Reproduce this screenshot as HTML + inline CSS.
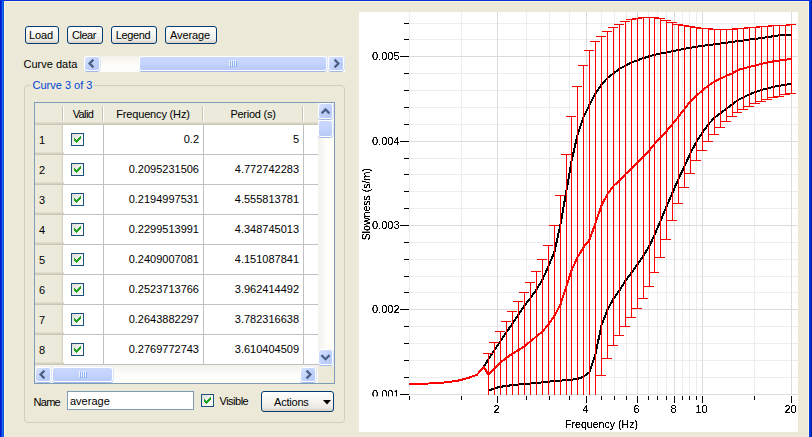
<!DOCTYPE html><html><head><meta charset="utf-8"><title>Curve browser</title><style>
html,body{margin:0;padding:0;}
body{width:812px;height:437px;overflow:hidden;background:#ece9d8;position:relative;font:11px "Liberation Sans", Arial, sans-serif;color:#000;}
*{box-sizing:border-box;}
.abs{position:absolute;}
.chart{position:absolute;left:0;top:0;}
.t{position:absolute;white-space:pre;line-height:13px;height:13px;}
.btn{position:absolute;border:1px solid #003c74;border-radius:3px;background:linear-gradient(#fff 0%,#f6f5f0 45%,#ecebe5 80%,#d6d0c5 100%);text-align:center;}
.btn span{position:absolute;left:-2px;right:0;white-space:pre;line-height:13px;}
.sbbtn{position:absolute;border:1px solid #fff;border-radius:3px;background:linear-gradient(135deg,#d9e4fe 0%,#c3d3fd 45%,#b4c7f6 100%);box-shadow:0 1px 0 #a3b8ea, 1px 0 0 #dbe4f8;}
.thumb{position:absolute;border:1px solid #fff;border-radius:3px;background:linear-gradient(#cad8fd 0%,#c3d3fd 50%,#b8caf7 100%);box-shadow:0 1px 0 #a3b8ea, 1px 0 0 #dbe4f8;}
.cb{position:absolute;width:13px;height:13px;border:1px solid #1c5180;background:linear-gradient(135deg,#dcdcd7 0%,#f3f3ef 50%,#fff 100%);}
.cb svg{position:absolute;left:0;top:0;}
.hdr{position:absolute;background:#ebeadb;}
</style></head><body>
<div class="abs" style="left:4px;top:1px;width:805px;height:1px;background:#fdf5d7"></div>
<div class="abs" style="left:4px;top:1px;width:1px;height:436px;background:#fdf5d7"></div>
<div class="abs" style="left:808px;top:1px;width:1px;height:436px;background:#fdf5d7"></div>
<div class="abs" style="left:0px;top:0;width:1px;height:437px;background:#0019cf"></div>
<div class="abs" style="left:1px;top:0;width:1px;height:437px;background:#0831d9"></div>
<div class="abs" style="left:2px;top:0;width:1px;height:437px;background:#166aee"></div>
<div class="abs" style="left:3px;top:0;width:1px;height:437px;background:#0855dd"></div>
<div class="abs" style="left:809px;top:0;width:1px;height:437px;background:#0037e6"></div>
<div class="abs" style="left:810px;top:0;width:1px;height:437px;background:#0030d8"></div>
<div class="abs" style="left:811px;top:0;width:1px;height:437px;background:#001ea0"></div>
<div class="abs" style="left:0;top:0;width:812px;height:1px;background:#0831d9"></div>
<div class="btn" style="left:25px;top:26px;width:34px;height:18px"><span style="top:2.0px;letter-spacing:-0.15px">Load</span></div>
<div class="btn" style="left:67px;top:26px;width:36px;height:18px"><span style="top:2.0px;letter-spacing:-0.45px">Clear</span></div>
<div class="btn" style="left:111px;top:26px;width:46px;height:18px"><span style="top:2.0px;letter-spacing:-0.4px">Legend</span></div>
<div class="btn" style="left:165px;top:26px;width:52px;height:18px"><span style="top:2.0px;letter-spacing:-0.1px">Average</span></div>
<div class="t" style="left:23.5px;top:58px">Curve data</div>
<div class="abs" style="left:84px;top:56px;width:261px;height:16px;background:linear-gradient(#f3f1ec,#fefefb 60%)"></div>
<div class="sbbtn" style="left:84px;top:56px;width:16px;height:15px"><svg width="16" height="16" viewBox="0 0 16 16" style="position:absolute;left:-1px;top:-1px"><path d="M9.4 3.6 L5.6 7.5 L9.4 11.4" fill="none" stroke="#4d6185" stroke-width="2.3"/></svg></div>
<div class="sbbtn" style="left:328px;top:56px;width:16px;height:15px"><svg width="16" height="16" viewBox="0 0 16 16" style="position:absolute;left:-1px;top:-1px"><path d="M6.6 3.6 L10.4 7.5 L6.6 11.4" fill="none" stroke="#4d6185" stroke-width="2.3"/></svg></div>
<div class="thumb" style="left:139px;top:56px;width:188px;height:15px"></div>
<div class="abs" style="left:229px;top:60px;width:1px;height:6px;background:#eef4fe"></div><div class="abs" style="left:230px;top:61px;width:1px;height:6px;background:#8cb0f8"></div><div class="abs" style="left:231px;top:60px;width:1px;height:6px;background:#eef4fe"></div><div class="abs" style="left:232px;top:61px;width:1px;height:6px;background:#8cb0f8"></div><div class="abs" style="left:233px;top:60px;width:1px;height:6px;background:#eef4fe"></div><div class="abs" style="left:234px;top:61px;width:1px;height:6px;background:#8cb0f8"></div><div class="abs" style="left:235px;top:60px;width:1px;height:6px;background:#eef4fe"></div><div class="abs" style="left:236px;top:61px;width:1px;height:6px;background:#8cb0f8"></div>
<div class="abs" style="left:24px;top:85px;width:321px;height:338px;border:1px solid #d0d0bf;border-radius:4px"></div>
<div class="t" style="left:30.5px;top:79px;background:#ece9d8;padding:0 2px;color:#0046d5">Curve 3 of 3</div>
<div class="abs" style="left:34px;top:102px;width:301px;height:282px;border:1px solid #7f9db9;background:#fff"></div>
<div class="hdr" style="left:35px;top:103px;width:283px;height:22px;border-bottom:1px solid #cbc7b8;box-shadow:inset 0 -1px 0 #d6d2c2, inset 0 -2px 0 #e2decd"></div>
<div class="abs" style="left:62px;top:106px;width:1px;height:15px;background:#c7c5b2"></div><div class="abs" style="left:63px;top:106px;width:1px;height:15px;background:#fff"></div>
<div class="abs" style="left:102px;top:106px;width:1px;height:15px;background:#c7c5b2"></div><div class="abs" style="left:103px;top:106px;width:1px;height:15px;background:#fff"></div>
<div class="abs" style="left:202px;top:106px;width:1px;height:15px;background:#c7c5b2"></div><div class="abs" style="left:203px;top:106px;width:1px;height:15px;background:#fff"></div>
<div class="abs" style="left:302px;top:106px;width:1px;height:15px;background:#c7c5b2"></div><div class="abs" style="left:303px;top:106px;width:1px;height:15px;background:#fff"></div>
<div class="t" style="left:64px;width:38px;top:108px;text-align:center;letter-spacing:-0.6px">Valid</div>
<div class="t" style="left:104px;width:98px;top:108px;text-align:center;letter-spacing:-0.17px">Frequency (Hz)</div>
<div class="t" style="left:204px;width:98px;top:108px;text-align:center;letter-spacing:-0.25px">Period (s)</div>
<div class="hdr" style="left:35px;top:125px;width:28px;height:30px;border-right:1px solid #d8d4c4;box-shadow:inset -1px 0 0 #e4e1d1"></div>
<div class="abs" style="left:35px;top:152px;width:29px;height:3px;background:linear-gradient(#e2decd 0,#e2decd 33%,#d6d2c2 33%,#d6d2c2 67%,#cbc7b8 67%)"></div>
<div class="t" style="left:39px;top:134px">1</div>
<div class="abs" style="left:63px;top:154px;width:255px;height:1px;background:#c0c0c0"></div>
<div class="cb" style="left:71px;top:133px"><svg width="11" height="11" viewBox="1 1 11 11" shape-rendering="crispEdges" style="position:absolute;left:0;top:0"><g fill="#21a121"><rect x="3" y="5" width="1" height="3"/><rect x="4" y="6" width="1" height="3"/><rect x="5" y="7" width="1" height="3"/><rect x="6" y="6" width="1" height="3"/><rect x="7" y="5" width="1" height="3"/><rect x="8" y="4" width="1" height="3"/><rect x="9" y="3" width="1" height="3"/></g></svg></div>
<div class="t" style="left:104px;width:95px;top:133px;text-align:right">0.2</div>
<div class="t" style="left:204px;width:95px;top:133px;text-align:right">5</div>
<div class="hdr" style="left:35px;top:155px;width:28px;height:30px;border-right:1px solid #d8d4c4;box-shadow:inset -1px 0 0 #e4e1d1"></div>
<div class="abs" style="left:35px;top:182px;width:29px;height:3px;background:linear-gradient(#e2decd 0,#e2decd 33%,#d6d2c2 33%,#d6d2c2 67%,#cbc7b8 67%)"></div>
<div class="t" style="left:39px;top:164px">2</div>
<div class="abs" style="left:63px;top:184px;width:255px;height:1px;background:#c0c0c0"></div>
<div class="cb" style="left:71px;top:163px"><svg width="11" height="11" viewBox="1 1 11 11" shape-rendering="crispEdges" style="position:absolute;left:0;top:0"><g fill="#21a121"><rect x="3" y="5" width="1" height="3"/><rect x="4" y="6" width="1" height="3"/><rect x="5" y="7" width="1" height="3"/><rect x="6" y="6" width="1" height="3"/><rect x="7" y="5" width="1" height="3"/><rect x="8" y="4" width="1" height="3"/><rect x="9" y="3" width="1" height="3"/></g></svg></div>
<div class="t" style="left:104px;width:95px;top:163px;text-align:right">0.2095231506</div>
<div class="t" style="left:204px;width:95px;top:163px;text-align:right">4.772742283</div>
<div class="hdr" style="left:35px;top:185px;width:28px;height:30px;border-right:1px solid #d8d4c4;box-shadow:inset -1px 0 0 #e4e1d1"></div>
<div class="abs" style="left:35px;top:212px;width:29px;height:3px;background:linear-gradient(#e2decd 0,#e2decd 33%,#d6d2c2 33%,#d6d2c2 67%,#cbc7b8 67%)"></div>
<div class="t" style="left:39px;top:194px">3</div>
<div class="abs" style="left:63px;top:214px;width:255px;height:1px;background:#c0c0c0"></div>
<div class="cb" style="left:71px;top:193px"><svg width="11" height="11" viewBox="1 1 11 11" shape-rendering="crispEdges" style="position:absolute;left:0;top:0"><g fill="#21a121"><rect x="3" y="5" width="1" height="3"/><rect x="4" y="6" width="1" height="3"/><rect x="5" y="7" width="1" height="3"/><rect x="6" y="6" width="1" height="3"/><rect x="7" y="5" width="1" height="3"/><rect x="8" y="4" width="1" height="3"/><rect x="9" y="3" width="1" height="3"/></g></svg></div>
<div class="t" style="left:104px;width:95px;top:193px;text-align:right">0.2194997531</div>
<div class="t" style="left:204px;width:95px;top:193px;text-align:right">4.555813781</div>
<div class="hdr" style="left:35px;top:215px;width:28px;height:30px;border-right:1px solid #d8d4c4;box-shadow:inset -1px 0 0 #e4e1d1"></div>
<div class="abs" style="left:35px;top:242px;width:29px;height:3px;background:linear-gradient(#e2decd 0,#e2decd 33%,#d6d2c2 33%,#d6d2c2 67%,#cbc7b8 67%)"></div>
<div class="t" style="left:39px;top:224px">4</div>
<div class="abs" style="left:63px;top:244px;width:255px;height:1px;background:#c0c0c0"></div>
<div class="cb" style="left:71px;top:223px"><svg width="11" height="11" viewBox="1 1 11 11" shape-rendering="crispEdges" style="position:absolute;left:0;top:0"><g fill="#21a121"><rect x="3" y="5" width="1" height="3"/><rect x="4" y="6" width="1" height="3"/><rect x="5" y="7" width="1" height="3"/><rect x="6" y="6" width="1" height="3"/><rect x="7" y="5" width="1" height="3"/><rect x="8" y="4" width="1" height="3"/><rect x="9" y="3" width="1" height="3"/></g></svg></div>
<div class="t" style="left:104px;width:95px;top:223px;text-align:right">0.2299513991</div>
<div class="t" style="left:204px;width:95px;top:223px;text-align:right">4.348745013</div>
<div class="hdr" style="left:35px;top:245px;width:28px;height:30px;border-right:1px solid #d8d4c4;box-shadow:inset -1px 0 0 #e4e1d1"></div>
<div class="abs" style="left:35px;top:272px;width:29px;height:3px;background:linear-gradient(#e2decd 0,#e2decd 33%,#d6d2c2 33%,#d6d2c2 67%,#cbc7b8 67%)"></div>
<div class="t" style="left:39px;top:254px">5</div>
<div class="abs" style="left:63px;top:274px;width:255px;height:1px;background:#c0c0c0"></div>
<div class="cb" style="left:71px;top:253px"><svg width="11" height="11" viewBox="1 1 11 11" shape-rendering="crispEdges" style="position:absolute;left:0;top:0"><g fill="#21a121"><rect x="3" y="5" width="1" height="3"/><rect x="4" y="6" width="1" height="3"/><rect x="5" y="7" width="1" height="3"/><rect x="6" y="6" width="1" height="3"/><rect x="7" y="5" width="1" height="3"/><rect x="8" y="4" width="1" height="3"/><rect x="9" y="3" width="1" height="3"/></g></svg></div>
<div class="t" style="left:104px;width:95px;top:253px;text-align:right">0.2409007081</div>
<div class="t" style="left:204px;width:95px;top:253px;text-align:right">4.151087841</div>
<div class="hdr" style="left:35px;top:275px;width:28px;height:30px;border-right:1px solid #d8d4c4;box-shadow:inset -1px 0 0 #e4e1d1"></div>
<div class="abs" style="left:35px;top:302px;width:29px;height:3px;background:linear-gradient(#e2decd 0,#e2decd 33%,#d6d2c2 33%,#d6d2c2 67%,#cbc7b8 67%)"></div>
<div class="t" style="left:39px;top:284px">6</div>
<div class="abs" style="left:63px;top:304px;width:255px;height:1px;background:#c0c0c0"></div>
<div class="cb" style="left:71px;top:283px"><svg width="11" height="11" viewBox="1 1 11 11" shape-rendering="crispEdges" style="position:absolute;left:0;top:0"><g fill="#21a121"><rect x="3" y="5" width="1" height="3"/><rect x="4" y="6" width="1" height="3"/><rect x="5" y="7" width="1" height="3"/><rect x="6" y="6" width="1" height="3"/><rect x="7" y="5" width="1" height="3"/><rect x="8" y="4" width="1" height="3"/><rect x="9" y="3" width="1" height="3"/></g></svg></div>
<div class="t" style="left:104px;width:95px;top:283px;text-align:right">0.2523713766</div>
<div class="t" style="left:204px;width:95px;top:283px;text-align:right">3.962414492</div>
<div class="hdr" style="left:35px;top:305px;width:28px;height:30px;border-right:1px solid #d8d4c4;box-shadow:inset -1px 0 0 #e4e1d1"></div>
<div class="abs" style="left:35px;top:332px;width:29px;height:3px;background:linear-gradient(#e2decd 0,#e2decd 33%,#d6d2c2 33%,#d6d2c2 67%,#cbc7b8 67%)"></div>
<div class="t" style="left:39px;top:314px">7</div>
<div class="abs" style="left:63px;top:334px;width:255px;height:1px;background:#c0c0c0"></div>
<div class="cb" style="left:71px;top:313px"><svg width="11" height="11" viewBox="1 1 11 11" shape-rendering="crispEdges" style="position:absolute;left:0;top:0"><g fill="#21a121"><rect x="3" y="5" width="1" height="3"/><rect x="4" y="6" width="1" height="3"/><rect x="5" y="7" width="1" height="3"/><rect x="6" y="6" width="1" height="3"/><rect x="7" y="5" width="1" height="3"/><rect x="8" y="4" width="1" height="3"/><rect x="9" y="3" width="1" height="3"/></g></svg></div>
<div class="t" style="left:104px;width:95px;top:313px;text-align:right">0.2643882297</div>
<div class="t" style="left:204px;width:95px;top:313px;text-align:right">3.782316638</div>
<div class="hdr" style="left:35px;top:335px;width:28px;height:30px;border-right:1px solid #d8d4c4;box-shadow:inset -1px 0 0 #e4e1d1"></div>
<div class="abs" style="left:35px;top:362px;width:29px;height:3px;background:linear-gradient(#e2decd 0,#e2decd 33%,#d6d2c2 33%,#d6d2c2 67%,#cbc7b8 67%)"></div>
<div class="t" style="left:39px;top:344px">8</div>
<div class="abs" style="left:63px;top:364px;width:255px;height:1px;background:#c0c0c0"></div>
<div class="cb" style="left:71px;top:343px"><svg width="11" height="11" viewBox="1 1 11 11" shape-rendering="crispEdges" style="position:absolute;left:0;top:0"><g fill="#21a121"><rect x="3" y="5" width="1" height="3"/><rect x="4" y="6" width="1" height="3"/><rect x="5" y="7" width="1" height="3"/><rect x="6" y="6" width="1" height="3"/><rect x="7" y="5" width="1" height="3"/><rect x="8" y="4" width="1" height="3"/><rect x="9" y="3" width="1" height="3"/></g></svg></div>
<div class="t" style="left:104px;width:95px;top:343px;text-align:right">0.2769772743</div>
<div class="t" style="left:204px;width:95px;top:343px;text-align:right">3.610404509</div>
<div class="abs" style="left:103px;top:125px;width:1px;height:240px;background:#c0c0c0"></div>
<div class="abs" style="left:203px;top:125px;width:1px;height:240px;background:#c0c0c0"></div>
<div class="abs" style="left:303px;top:125px;width:1px;height:240px;background:#c0c0c0"></div>
<div class="abs" style="left:318px;top:103px;width:16px;height:263px;background:linear-gradient(90deg,#f3f1ec,#fefefb 60%)"></div>
<div class="sbbtn" style="left:318px;top:103px;width:15px;height:16px"><svg width="16" height="16" viewBox="0 0 16 16" style="position:absolute;left:-1px;top:-1px"><path d="M3.6 10.4 L7.5 6.5 L11.4 10.4" fill="none" stroke="#4d6185" stroke-width="2.3"/></svg></div>
<div class="sbbtn" style="left:318px;top:349px;width:15px;height:16px"><svg width="16" height="16" viewBox="0 0 16 16" style="position:absolute;left:-1px;top:-1px"><path d="M3.4 6.1 L7.5 10.2 L11.6 6.1" fill="none" stroke="#4d6185" stroke-width="2.3"/></svg></div>
<div class="thumb" style="left:318px;top:120px;width:15px;height:17px"></div>
<div class="abs" style="left:35px;top:365px;width:283px;height:18px;background:linear-gradient(#f3f1ec,#fefefb 60%)"></div>
<div class="abs" style="left:318px;top:366px;width:16px;height:17px;background:#ece9d8"></div>
<div class="sbbtn" style="left:35px;top:367px;width:16px;height:15px"><svg width="16" height="16" viewBox="0 0 16 16" style="position:absolute;left:-1px;top:-1px"><path d="M9.4 3.6 L5.6 7.5 L9.4 11.4" fill="none" stroke="#4d6185" stroke-width="2.3"/></svg></div>
<div class="sbbtn" style="left:300px;top:367px;width:16px;height:15px"><svg width="16" height="16" viewBox="0 0 16 16" style="position:absolute;left:-1px;top:-1px"><path d="M6.6 3.6 L10.4 7.5 L6.6 11.4" fill="none" stroke="#4d6185" stroke-width="2.3"/></svg></div>
<div class="thumb" style="left:52px;top:367px;width:61px;height:15px"></div>
<div class="abs" style="left:79px;top:371px;width:1px;height:6px;background:#eef4fe"></div><div class="abs" style="left:80px;top:372px;width:1px;height:6px;background:#8cb0f8"></div><div class="abs" style="left:81px;top:371px;width:1px;height:6px;background:#eef4fe"></div><div class="abs" style="left:82px;top:372px;width:1px;height:6px;background:#8cb0f8"></div><div class="abs" style="left:83px;top:371px;width:1px;height:6px;background:#eef4fe"></div><div class="abs" style="left:84px;top:372px;width:1px;height:6px;background:#8cb0f8"></div><div class="abs" style="left:85px;top:371px;width:1px;height:6px;background:#eef4fe"></div><div class="abs" style="left:86px;top:372px;width:1px;height:6px;background:#8cb0f8"></div>
<div class="t" style="left:33.5px;top:396px;letter-spacing:-0.7px">Name</div>
<div class="abs" style="left:67px;top:391px;width:127px;height:19px;border:1px solid #7f9db9;background:#fff"></div>
<div class="t" style="left:70px;top:395px">average</div>
<div class="cb" style="left:201px;top:394px"><svg width="11" height="11" viewBox="1 1 11 11" shape-rendering="crispEdges" style="position:absolute;left:0;top:0"><g fill="#21a121"><rect x="3" y="5" width="1" height="3"/><rect x="4" y="6" width="1" height="3"/><rect x="5" y="7" width="1" height="3"/><rect x="6" y="6" width="1" height="3"/><rect x="7" y="5" width="1" height="3"/><rect x="8" y="4" width="1" height="3"/><rect x="9" y="3" width="1" height="3"/></g></svg></div>
<div class="t" style="left:219.5px;top:395px;letter-spacing:-0.5px">Visible</div>
<div class="btn" style="left:261px;top:391px;width:73px;height:21px"><span style="left:12px;right:auto;top:4px;letter-spacing:-0.2px">Actions</span><svg width="9" height="5" viewBox="0 0 9 5" style="position:absolute;left:60.5px;top:8px"><path d="M0 0 L8 0 L4 4.5 Z" fill="#000"/></svg></div>
<svg class="chart" width="812" height="437" viewBox="0 0 812 437" shape-rendering="crispEdges">
<rect x="359" y="12" width="439" height="420" fill="#fff"/>
<clipPath id="pc"><rect x="409" y="12" width="389" height="383"/></clipPath>
<clipPath id="lc"><rect x="359" y="12" width="50" height="384.5"/></clipPath>
<rect x="409" y="12" width="1" height="383" fill="#ececec"/>
<rect x="461" y="12" width="1" height="383" fill="#ececec"/>
<rect x="497" y="12" width="1" height="383" fill="#dcdcdc"/>
<rect x="526" y="12" width="1" height="383" fill="#ececec"/>
<rect x="549" y="12" width="1" height="383" fill="#ececec"/>
<rect x="569" y="12" width="1" height="383" fill="#ececec"/>
<rect x="586" y="12" width="1" height="383" fill="#dcdcdc"/>
<rect x="601" y="12" width="1" height="383" fill="#ececec"/>
<rect x="614" y="12" width="1" height="383" fill="#ececec"/>
<rect x="626" y="12" width="1" height="383" fill="#ececec"/>
<rect x="637" y="12" width="1" height="383" fill="#dcdcdc"/>
<rect x="648" y="12" width="1" height="383" fill="#ececec"/>
<rect x="657" y="12" width="1" height="383" fill="#ececec"/>
<rect x="666" y="12" width="1" height="383" fill="#ececec"/>
<rect x="674" y="12" width="1" height="383" fill="#dcdcdc"/>
<rect x="682" y="12" width="1" height="383" fill="#ececec"/>
<rect x="689" y="12" width="1" height="383" fill="#ececec"/>
<rect x="696" y="12" width="1" height="383" fill="#ececec"/>
<rect x="702" y="12" width="1" height="383" fill="#dcdcdc"/>
<rect x="754" y="12" width="1" height="383" fill="#ececec"/>
<rect x="791" y="12" width="1" height="383" fill="#dcdcdc"/>
<rect x="409" y="394" width="389" height="1" fill="#dcdcdc"/>
<rect x="409" y="377" width="389" height="1" fill="#ececec"/>
<rect x="409" y="360" width="389" height="1" fill="#ececec"/>
<rect x="409" y="343" width="389" height="1" fill="#ececec"/>
<rect x="409" y="326" width="389" height="1" fill="#ececec"/>
<rect x="409" y="309" width="389" height="1" fill="#dcdcdc"/>
<rect x="409" y="292" width="389" height="1" fill="#ececec"/>
<rect x="409" y="276" width="389" height="1" fill="#ececec"/>
<rect x="409" y="259" width="389" height="1" fill="#ececec"/>
<rect x="409" y="242" width="389" height="1" fill="#ececec"/>
<rect x="409" y="225" width="389" height="1" fill="#dcdcdc"/>
<rect x="409" y="208" width="389" height="1" fill="#ececec"/>
<rect x="409" y="191" width="389" height="1" fill="#ececec"/>
<rect x="409" y="174" width="389" height="1" fill="#ececec"/>
<rect x="409" y="158" width="389" height="1" fill="#ececec"/>
<rect x="409" y="141" width="389" height="1" fill="#dcdcdc"/>
<rect x="409" y="124" width="389" height="1" fill="#ececec"/>
<rect x="409" y="107" width="389" height="1" fill="#ececec"/>
<rect x="409" y="90" width="389" height="1" fill="#ececec"/>
<rect x="409" y="73" width="389" height="1" fill="#ececec"/>
<rect x="409" y="56" width="389" height="1" fill="#dcdcdc"/>
<rect x="409" y="39" width="389" height="1" fill="#ececec"/>
<rect x="409" y="23" width="389" height="1" fill="#ececec"/>
<rect x="497" y="12" width="1" height="383" fill="#dcdcdc"/>
<rect x="586" y="12" width="1" height="383" fill="#dcdcdc"/>
<rect x="637" y="12" width="1" height="383" fill="#dcdcdc"/>
<rect x="674" y="12" width="1" height="383" fill="#dcdcdc"/>
<rect x="702" y="12" width="1" height="383" fill="#dcdcdc"/>
<rect x="791" y="12" width="1" height="383" fill="#dcdcdc"/>
<rect x="409" y="394" width="389" height="1" fill="#dcdcdc"/>
<rect x="409" y="309" width="389" height="1" fill="#dcdcdc"/>
<rect x="409" y="225" width="389" height="1" fill="#dcdcdc"/>
<rect x="409" y="141" width="389" height="1" fill="#dcdcdc"/>
<rect x="409" y="56" width="389" height="1" fill="#dcdcdc"/>
<rect x="409" y="396" width="1" height="4" fill="#000"/>
<rect x="461" y="396" width="1" height="4" fill="#000"/>
<rect x="497" y="396" width="1" height="7" fill="#000"/>
<rect x="526" y="396" width="1" height="4" fill="#000"/>
<rect x="549" y="396" width="1" height="4" fill="#000"/>
<rect x="569" y="396" width="1" height="4" fill="#000"/>
<rect x="586" y="396" width="1" height="7" fill="#000"/>
<rect x="601" y="396" width="1" height="4" fill="#000"/>
<rect x="614" y="396" width="1" height="4" fill="#000"/>
<rect x="626" y="396" width="1" height="4" fill="#000"/>
<rect x="637" y="396" width="1" height="7" fill="#000"/>
<rect x="648" y="396" width="1" height="4" fill="#000"/>
<rect x="657" y="396" width="1" height="4" fill="#000"/>
<rect x="666" y="396" width="1" height="4" fill="#000"/>
<rect x="674" y="396" width="1" height="7" fill="#000"/>
<rect x="682" y="396" width="1" height="4" fill="#000"/>
<rect x="689" y="396" width="1" height="4" fill="#000"/>
<rect x="696" y="396" width="1" height="4" fill="#000"/>
<rect x="702" y="396" width="1" height="7" fill="#000"/>
<rect x="754" y="396" width="1" height="4" fill="#000"/>
<rect x="791" y="396" width="1" height="7" fill="#000"/>
<rect x="400" y="394" width="9" height="1" fill="#000"/>
<rect x="404" y="377" width="5" height="1" fill="#000"/>
<rect x="404" y="360" width="5" height="1" fill="#000"/>
<rect x="404" y="343" width="5" height="1" fill="#000"/>
<rect x="404" y="326" width="5" height="1" fill="#000"/>
<rect x="400" y="309" width="9" height="1" fill="#000"/>
<rect x="404" y="292" width="5" height="1" fill="#000"/>
<rect x="404" y="276" width="5" height="1" fill="#000"/>
<rect x="404" y="259" width="5" height="1" fill="#000"/>
<rect x="404" y="242" width="5" height="1" fill="#000"/>
<rect x="400" y="225" width="9" height="1" fill="#000"/>
<rect x="404" y="208" width="5" height="1" fill="#000"/>
<rect x="404" y="191" width="5" height="1" fill="#000"/>
<rect x="404" y="174" width="5" height="1" fill="#000"/>
<rect x="404" y="158" width="5" height="1" fill="#000"/>
<rect x="400" y="141" width="9" height="1" fill="#000"/>
<rect x="404" y="124" width="5" height="1" fill="#000"/>
<rect x="404" y="107" width="5" height="1" fill="#000"/>
<rect x="404" y="90" width="5" height="1" fill="#000"/>
<rect x="404" y="73" width="5" height="1" fill="#000"/>
<rect x="400" y="56" width="9" height="1" fill="#000"/>
<rect x="404" y="39" width="5" height="1" fill="#000"/>
<rect x="404" y="23" width="5" height="1" fill="#000"/>
<polyline points="483.4,367.2 488.5,359.2 494.5,350.2 500.5,341.2 506.5,332.0 512.5,323.6 518.5,314.5 524.5,305.7 530.5,297.9 536.5,289.5 542.5,279.6 548.5,266.0 554.5,251.7 560.5,224.3 566.5,190.4 571.5,161.3 577.5,134.9 583.5,117.2 589.5,104.7 595.5,93.5 601.5,84.3 607.5,78.0 613.5,73.2 619.5,68.9 625.5,65.7 631.5,62.5 637.5,60.2 643.5,58.1 649.5,56.2 654.5,54.9 660.5,53.4 666.5,52.4 672.5,51.3 678.5,50.0 684.5,48.8 690.5,47.8 696.5,46.8 702.5,45.8 708.5,45.1 714.5,44.3 720.5,43.6 726.5,42.7 732.5,41.9 737.5,41.2 743.5,40.4 749.5,39.6 755.5,38.8 761.5,38.0 767.5,37.1 773.5,36.2 779.5,35.3 785.5,35.0 791.5,34.7" fill="none" stroke="#000" stroke-width="2" stroke-linejoin="round" clip-path="url(#pc)"/>
<polyline points="488.5,390.8 494.5,388.2 500.5,386.8 506.5,385.9 512.5,385.1 518.5,384.4 524.5,383.9 530.5,383.5 536.5,382.9 542.5,382.4 548.5,381.7 554.5,381.1 560.5,380.6 566.5,380.2 571.5,379.7 577.5,378.8 583.5,376.8 589.5,372.1 595.5,353.7 601.5,325.3 607.5,309.7 613.5,298.7 619.5,290.3 625.5,280.7 631.5,272.7 637.5,264.4 643.5,255.5 649.5,245.8 654.5,234.9 660.5,221.0 666.5,206.4 672.5,192.7 678.5,178.8 684.5,166.3 690.5,153.0 696.5,141.8 702.5,132.3 708.5,124.2 714.5,117.7 720.5,113.2 726.5,108.6 732.5,104.1 737.5,100.3 743.5,97.2 749.5,94.2 755.5,92.0 761.5,89.9 767.5,88.3 773.5,86.8 779.5,85.7 785.5,84.7 791.5,83.8" fill="none" stroke="#000" stroke-width="2" stroke-linejoin="round" clip-path="url(#pc)"/>
<g clip-path="url(#pc)" fill="#f00">
<rect x="488" y="353" width="1" height="68"/>
<rect x="483" y="353" width="10" height="1"/>
<rect x="483" y="420" width="10" height="1"/>
<rect x="494" y="342" width="1" height="79"/>
<rect x="489" y="342" width="10" height="1"/>
<rect x="489" y="420" width="10" height="1"/>
<rect x="500" y="331" width="1" height="90"/>
<rect x="495" y="331" width="10" height="1"/>
<rect x="495" y="420" width="10" height="1"/>
<rect x="506" y="321" width="1" height="100"/>
<rect x="501" y="321" width="10" height="1"/>
<rect x="501" y="420" width="10" height="1"/>
<rect x="512" y="311" width="1" height="110"/>
<rect x="507" y="311" width="10" height="1"/>
<rect x="507" y="420" width="10" height="1"/>
<rect x="518" y="301" width="1" height="120"/>
<rect x="513" y="301" width="10" height="1"/>
<rect x="513" y="420" width="10" height="1"/>
<rect x="524" y="292" width="1" height="129"/>
<rect x="519" y="292" width="10" height="1"/>
<rect x="519" y="420" width="10" height="1"/>
<rect x="530" y="282" width="1" height="139"/>
<rect x="525" y="282" width="10" height="1"/>
<rect x="525" y="420" width="10" height="1"/>
<rect x="536" y="271" width="1" height="150"/>
<rect x="531" y="271" width="10" height="1"/>
<rect x="531" y="420" width="10" height="1"/>
<rect x="542" y="259" width="1" height="162"/>
<rect x="537" y="259" width="10" height="1"/>
<rect x="537" y="420" width="10" height="1"/>
<rect x="548" y="245" width="1" height="176"/>
<rect x="543" y="245" width="10" height="1"/>
<rect x="543" y="420" width="10" height="1"/>
<rect x="554" y="225" width="1" height="196"/>
<rect x="549" y="225" width="10" height="1"/>
<rect x="549" y="420" width="10" height="1"/>
<rect x="560" y="195" width="1" height="226"/>
<rect x="555" y="195" width="10" height="1"/>
<rect x="555" y="420" width="10" height="1"/>
<rect x="566" y="154" width="1" height="267"/>
<rect x="561" y="154" width="10" height="1"/>
<rect x="561" y="420" width="10" height="1"/>
<rect x="571" y="116" width="1" height="305"/>
<rect x="566" y="116" width="10" height="1"/>
<rect x="566" y="420" width="10" height="1"/>
<rect x="577" y="86" width="1" height="335"/>
<rect x="572" y="86" width="10" height="1"/>
<rect x="572" y="420" width="10" height="1"/>
<rect x="583" y="65" width="1" height="356"/>
<rect x="578" y="65" width="10" height="1"/>
<rect x="578" y="420" width="10" height="1"/>
<rect x="589" y="50" width="1" height="371"/>
<rect x="584" y="50" width="10" height="1"/>
<rect x="584" y="420" width="10" height="1"/>
<rect x="595" y="41" width="1" height="380"/>
<rect x="590" y="41" width="10" height="1"/>
<rect x="590" y="420" width="10" height="1"/>
<rect x="601" y="36" width="1" height="340"/>
<rect x="596" y="36" width="10" height="1"/>
<rect x="596" y="375" width="10" height="1"/>
<rect x="607" y="31" width="1" height="328"/>
<rect x="602" y="31" width="10" height="1"/>
<rect x="602" y="358" width="10" height="1"/>
<rect x="613" y="27" width="1" height="319"/>
<rect x="608" y="27" width="10" height="1"/>
<rect x="608" y="345" width="10" height="1"/>
<rect x="619" y="24" width="1" height="312"/>
<rect x="614" y="24" width="10" height="1"/>
<rect x="614" y="335" width="10" height="1"/>
<rect x="625" y="21" width="1" height="306"/>
<rect x="620" y="21" width="10" height="1"/>
<rect x="620" y="326" width="10" height="1"/>
<rect x="631" y="19" width="1" height="299"/>
<rect x="626" y="19" width="10" height="1"/>
<rect x="626" y="317" width="10" height="1"/>
<rect x="637" y="18" width="1" height="291"/>
<rect x="632" y="18" width="10" height="1"/>
<rect x="632" y="308" width="10" height="1"/>
<rect x="643" y="17" width="1" height="282"/>
<rect x="638" y="17" width="10" height="1"/>
<rect x="638" y="298" width="10" height="1"/>
<rect x="649" y="17" width="1" height="270"/>
<rect x="644" y="17" width="10" height="1"/>
<rect x="644" y="286" width="10" height="1"/>
<rect x="654" y="17" width="1" height="256"/>
<rect x="649" y="17" width="10" height="1"/>
<rect x="649" y="272" width="10" height="1"/>
<rect x="660" y="18" width="1" height="240"/>
<rect x="655" y="18" width="10" height="1"/>
<rect x="655" y="257" width="10" height="1"/>
<rect x="666" y="20" width="1" height="220"/>
<rect x="661" y="20" width="10" height="1"/>
<rect x="661" y="239" width="10" height="1"/>
<rect x="672" y="22" width="1" height="199"/>
<rect x="667" y="22" width="10" height="1"/>
<rect x="667" y="220" width="10" height="1"/>
<rect x="678" y="24" width="1" height="180"/>
<rect x="673" y="24" width="10" height="1"/>
<rect x="673" y="203" width="10" height="1"/>
<rect x="684" y="25" width="1" height="163"/>
<rect x="679" y="25" width="10" height="1"/>
<rect x="679" y="187" width="10" height="1"/>
<rect x="690" y="26" width="1" height="148"/>
<rect x="685" y="26" width="10" height="1"/>
<rect x="685" y="173" width="10" height="1"/>
<rect x="696" y="27" width="1" height="134"/>
<rect x="691" y="27" width="10" height="1"/>
<rect x="691" y="160" width="10" height="1"/>
<rect x="702" y="28" width="1" height="123"/>
<rect x="697" y="28" width="10" height="1"/>
<rect x="697" y="150" width="10" height="1"/>
<rect x="708" y="28" width="1" height="114"/>
<rect x="703" y="28" width="10" height="1"/>
<rect x="703" y="141" width="10" height="1"/>
<rect x="714" y="29" width="1" height="106"/>
<rect x="709" y="29" width="10" height="1"/>
<rect x="709" y="134" width="10" height="1"/>
<rect x="720" y="29" width="1" height="99"/>
<rect x="715" y="29" width="10" height="1"/>
<rect x="715" y="127" width="10" height="1"/>
<rect x="726" y="29" width="1" height="93"/>
<rect x="721" y="29" width="10" height="1"/>
<rect x="721" y="121" width="10" height="1"/>
<rect x="732" y="29" width="1" height="88"/>
<rect x="727" y="29" width="10" height="1"/>
<rect x="727" y="116" width="10" height="1"/>
<rect x="737" y="28" width="1" height="85"/>
<rect x="732" y="28" width="10" height="1"/>
<rect x="732" y="112" width="10" height="1"/>
<rect x="743" y="28" width="1" height="82"/>
<rect x="738" y="28" width="10" height="1"/>
<rect x="738" y="109" width="10" height="1"/>
<rect x="749" y="27" width="1" height="80"/>
<rect x="744" y="27" width="10" height="1"/>
<rect x="744" y="106" width="10" height="1"/>
<rect x="755" y="27" width="1" height="77"/>
<rect x="750" y="27" width="10" height="1"/>
<rect x="750" y="103" width="10" height="1"/>
<rect x="761" y="26" width="1" height="76"/>
<rect x="756" y="26" width="10" height="1"/>
<rect x="756" y="101" width="10" height="1"/>
<rect x="767" y="26" width="1" height="74"/>
<rect x="762" y="26" width="10" height="1"/>
<rect x="762" y="99" width="10" height="1"/>
<rect x="773" y="25" width="1" height="73"/>
<rect x="768" y="25" width="10" height="1"/>
<rect x="768" y="97" width="10" height="1"/>
<rect x="779" y="25" width="1" height="72"/>
<rect x="774" y="25" width="10" height="1"/>
<rect x="774" y="96" width="10" height="1"/>
<rect x="785" y="25" width="1" height="70"/>
<rect x="780" y="25" width="10" height="1"/>
<rect x="780" y="94" width="10" height="1"/>
<rect x="791" y="24" width="1" height="70"/>
<rect x="786" y="24" width="10" height="1"/>
<rect x="786" y="93" width="10" height="1"/>
</g>
<polyline points="409.0,383.8 429.0,383.5 440.0,382.8 447.8,382.2 459.8,380.3 470.1,377.3 477.1,374.6 480.4,370.8 483.8,366.7 488.5,375.0 494.5,368.7 500.5,362.5 506.5,357.7 512.5,353.7 518.5,350.0 524.5,346.3 530.5,341.3 536.5,336.4 542.5,331.4 548.5,324.5 554.5,315.7 560.5,304.5 566.5,285.9 571.5,270.4 577.5,257.2 583.5,247.4 589.5,239.7 595.5,223.0 601.5,205.6 607.5,193.9 613.5,185.9 619.5,180.6 625.5,174.0 631.5,168.5 637.5,162.9 643.5,156.8 649.5,150.5 654.5,143.9 660.5,137.7 666.5,131.2 672.5,124.0 678.5,116.7 684.5,108.9 690.5,101.2 696.5,95.7 702.5,90.3 708.5,85.5 714.5,81.6 720.5,78.6 726.5,75.8 732.5,73.2 737.5,70.1 743.5,68.4 749.5,66.9 755.5,65.4 761.5,63.9 767.5,62.5 773.5,61.3 779.5,60.4 785.5,59.7 791.5,59.0" fill="none" stroke="#f00" stroke-width="2" stroke-linejoin="round" clip-path="url(#pc)"/>
<filter id="bin" x="0" y="0" width="812" height="437" filterUnits="userSpaceOnUse" color-interpolation-filters="sRGB"><feComponentTransfer><feFuncA type="linear" slope="4" intercept="-1.1"/></feComponentTransfer></filter>
<g font-family='"Liberation Sans", Arial, sans-serif' font-size="11" fill="#000" shape-rendering="auto" filter="url(#bin)">
<text x="496.5" y="413" text-anchor="middle">2</text>
<text x="585.5" y="413" text-anchor="middle">4</text>
<text x="636.5" y="413" text-anchor="middle">6</text>
<text x="673.5" y="413" text-anchor="middle">8</text>
<text x="701.5" y="413" text-anchor="middle">10</text>
<text x="790.5" y="413" text-anchor="middle">20</text>
<g clip-path="url(#lc)">
<text x="399.5" y="397.5" text-anchor="end">0.001</text>
<text x="399.5" y="312.5" text-anchor="end">0.002</text>
<text x="399.5" y="228.5" text-anchor="end">0.003</text>
<text x="399.5" y="144.5" text-anchor="end">0.004</text>
<text x="399.5" y="59.5" text-anchor="end">0.005</text>
</g>
<text x="565" y="428.4" textLength="73" lengthAdjust="spacingAndGlyphs">Frequency (Hz)</text>
<text transform="translate(369.5,240.3) rotate(-90)" textLength="72" lengthAdjust="spacingAndGlyphs">Slowness (s/m)</text>
</g>
</svg>
</body></html>
